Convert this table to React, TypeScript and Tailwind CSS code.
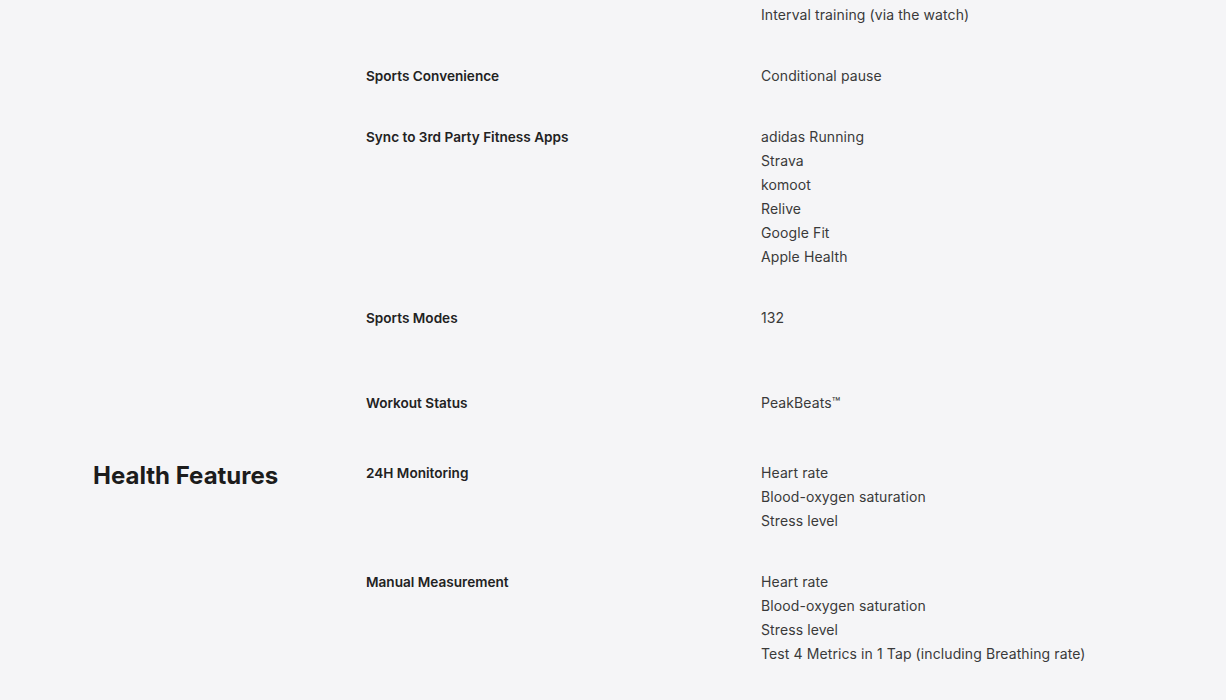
type Spec = { label: string; values: string[]; gap?: string };

const sports: Spec[] = [
  { label: "Sports Training Plans", values: ["Training plans (via the app)", "Interval training (via the watch)"] },
  { label: "Sports Convenience", values: ["Conditional pause"] },
  {
    label: "Sync to 3rd Party Fitness Apps",
    values: ["adidas Running", "Strava", "komoot", "Relive", "Google Fit", "Apple Health"],
  },
  { label: "Sports Modes", values: ["132"], gap: "pb-[61px]" },
  { label: "Workout Status", values: ["PeakBeats™"], gap: "pb-[46px]" },
];

const health: Spec[] = [
  { label: "24H Monitoring", values: ["Heart rate", "Blood-oxygen saturation", "Stress level"] },
  {
    label: "Manual Measurement",
    values: [
      "Heart rate",
      "Blood-oxygen saturation",
      "Stress level",
      "Test 4 Metrics in 1 Tap (including Breathing rate)",
    ],
  },
];

function SpecRow({ label, values, gap }: Spec) {
  return (
    <div className={`flex ${gap ?? "pb-[37px]"}`}>
      <div className="w-[395px] shrink-0 text-[13.6px] leading-[24px] font-semibold text-[#222]">{label}</div>
      <div className="flex flex-col text-[14px] leading-[24px] text-[#3a3a3a] tracking-[0.1px]">
        {values.map((v) => (
          <span key={v}>{v}</span>
        ))}
      </div>
    </div>
  );
}

export default function App() {
  return (
    <div className="min-h-screen bg-[#f5f5f7] font-['Inter','Noto_Sans',sans-serif] overflow-hidden">
      <div className="-mt-[21px] pl-[93px]">
        {/* sports section, heading scrolled off */}
        <div className="flex">
          <div className="w-[273px] shrink-0" />
          <div className="flex flex-col">
            {sports.map((s) => (
              <SpecRow key={s.label} {...s} />
            ))}
          </div>
        </div>

        <div className="flex items-start">
          <h2 className="w-[273px] shrink-0 text-[24px] leading-[30px] font-bold text-[#1c1c1c]">
            Health Features
          </h2>
          <div className="flex flex-col">
            {health.map((s) => (
              <SpecRow key={s.label} {...s} />
            ))}
          </div>
        </div>
      </div>
    </div>
  );
}
